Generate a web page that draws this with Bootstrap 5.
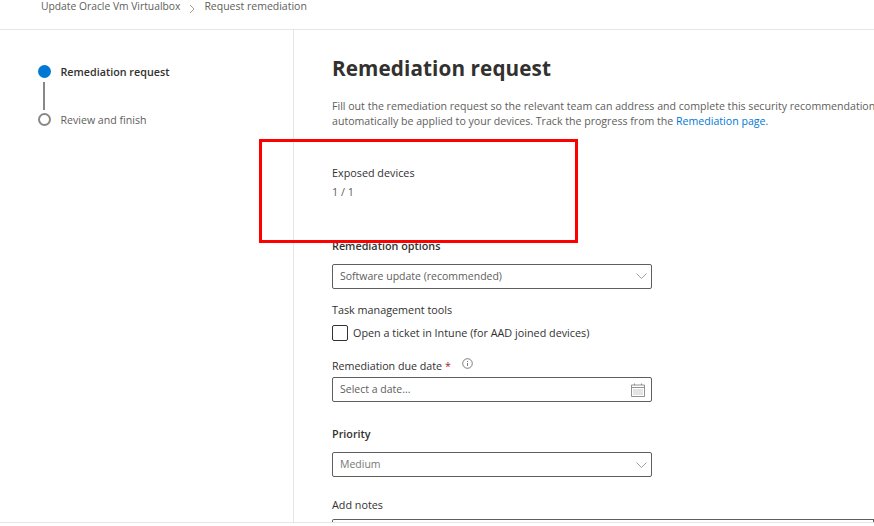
<!DOCTYPE html>
<html lang="en"><head><meta charset="utf-8"><title>Request remediation</title>
<link rel="stylesheet" href="https://cdn.jsdelivr.net/npm/bootstrap@5.3.0/dist/css/bootstrap.min.css">
<style>
html,body{height:526px;overflow:hidden}
body{font-family:"Open Sans","Noto Sans","Liberation Sans",sans-serif;font-size:10.8px;color:#323130;background:#fff;position:relative}
.crumbs{height:30px;border-bottom:1px solid #e6e6e6;padding-left:41px;color:#605e5c;line-height:12px;gap:9px;font-size:10.3px}
.crumb-end{font-size:10.5px}
.shell{height:493px;border-bottom:1px solid #e6e6e6}
.side{width:294px;flex:none;border-right:1px solid #e6e6e6;padding:35px 0 0 38px;font-size:10.6px}
.main{flex:1;min-width:0;padding:24px 0 0 38px;overflow:hidden}
.dot{width:13px;height:13px;border-radius:50%;flex:none}
.dot-on{background:#0078d4}
.dot-off{border:2px solid #8a8886}
.stem{width:2px;height:28px;background:#8a8886;margin:4px 0 3px 5px}
.step{height:13px;line-height:13px;gap:9.5px}
.step span:last-child{padding-top:2px}
.step-on{font-weight:600;font-size:10.75px}
.step-off{color:#605e5c}
.ttl{font-size:20.7px;font-weight:700;line-height:28px;margin:0 0 17px;color:#323130;letter-spacing:.1px}
.intro{white-space:nowrap;line-height:14.5px;color:#605e5c;margin:0 0 38px;font-size:10.6px}
.intro a{color:#0078d4;text-decoration:none}
.lbl{line-height:14px;display:block}
.lbl-b{font-weight:600}
.val{color:#605e5c;margin:5px 0 40px;line-height:14px}
.box{width:320px;height:25px;border:1px solid #605e5c;border-radius:2px;padding:0 4px 0 7px;color:#605e5c;font-size:10.5px}
.box span{padding-top:1px}
.box-soft{color:#797775}
.cal{margin-right:2px}
.gap-opt{margin-bottom:10.5px}
.gap-task{margin-top:14.5px}
.gap-chk{margin-top:8px}
.chk-text{margin-left:1px}
.due-text{font-size:10.7px}
.gap-due{margin-top:17px;margin-bottom:4px}
.info{margin-left:11px}
.gap-pri{margin-top:25px;margin-bottom:11px}
.gap-note{margin-top:21px}
.req{color:#a4262c}
.chk{width:16px;height:16px;border:1px solid #323130;border-radius:2px;flex:none}
.notes{height:30px;border:1px solid #605e5c;border-radius:2px 0 0 0;border-bottom:0;margin-top:7px;width:542px}
.outline{left:259px;top:139px;width:319px;height:103.5px;border:3px solid #f00;pointer-events:none}
</style></head><body>
<nav class="crumbs d-flex align-items-start" aria-label="breadcrumb">
<span>Update Oracle Vm Virtualbox</span>
<svg width="6" height="10" viewBox="0 0 6 10" class="mt-1" fill="none" stroke="#a19f9d"><path d="M1 1l4 4-4 4"/></svg>
<span class="crumb-end">Request remediation</span></nav>
<div class="shell d-flex">
<aside class="side">
<div class="step step-on d-flex align-items-center"><span class="dot dot-on"></span><span>Remediation request</span></div>
<div class="stem"></div>
<div class="step step-off d-flex align-items-center"><span class="dot dot-off"></span><span>Review and finish</span></div>
</aside>
<main class="main">
<h1 class="ttl">Remediation request</h1>
<p class="intro">Fill out the remediation request so the relevant team can address and complete this security recommendation<br>automatically be applied to your devices. Track the progress from the <a href="#">Remediation page</a>.</p>
<span class="lbl">Exposed devices</span>
<div class="val">1 / 1</div>
<label class="lbl lbl-b gap-opt">Remediation options</label>
<div class="box d-flex align-items-center justify-content-between"><span>Software update (recommended)</span>
<svg width="11" height="6" viewBox="0 0 11 6" fill="none" stroke="#8a8886" stroke-width=".8"><path d="M.5.5 5.5 5.5 10.5.5"/></svg></div>
<label class="lbl gap-task">Task management tools</label>
<div class="d-flex align-items-center gap-chk"><span class="chk me-1"></span><span class="text-nowrap chk-text">Open a ticket in Intune (for AAD joined devices)</span></div>
<div class="d-flex align-items-center gap-due"><span class="lbl due-text">Remediation due date <span class="req">*</span></span>
<svg class="info mb-1" width="11" height="11" viewBox="0 0 11 11" fill="none" stroke="#605e5c" stroke-width=".8"><circle cx="5.5" cy="5.5" r="4.8"/><path d="M5.5 5v3M5.5 3v1"/></svg></div>
<div class="box d-flex align-items-center justify-content-between"><span>Select a date...</span>
<svg class="cal" width="14" height="14" viewBox="0 0 14 14" fill="none" stroke="#797775" stroke-width=".8"><path d="M.5 2h13v11.5H.5zM.5 4.5h13M3.5.5V2M10.5.5V2"/><path stroke-dasharray="1 1" d="M2.5 7h9M2.5 9h9M2.5 11h9"/></svg></div>
<label class="lbl lbl-b gap-pri">Priority</label>
<div class="box box-soft d-flex align-items-center justify-content-between"><span>Medium</span>
<svg width="11" height="6" viewBox="0 0 11 6" fill="none" stroke="#8a8886" stroke-width=".8"><path d="M.5.5 5.5 5.5 10.5.5"/></svg></div>
<label class="lbl gap-note">Add notes</label>
<div class="notes"></div>
</main></div>
<div class="outline position-absolute"></div>
</body></html>
